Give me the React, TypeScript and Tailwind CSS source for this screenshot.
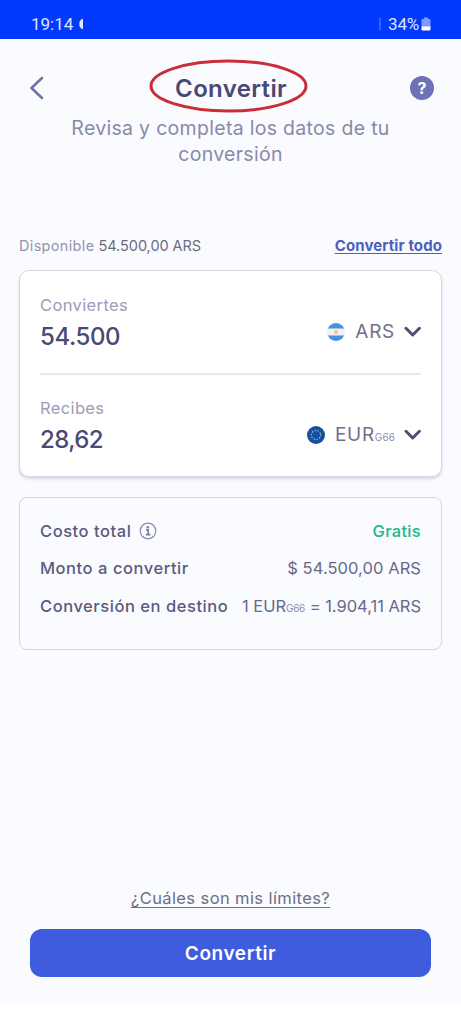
import React from 'react';

interface SummaryRow {
  label: string;
  info?: boolean;
  value: React.ReactNode;
  valueClass: string;
}

const rows: SummaryRow[] = [
  {
    label: 'Costo total',
    info: true,
    value: 'Gratis',
    valueClass: 'font-medium text-[#25b589] tracking-[0.3px]',
  },
  {
    label: 'Monto a convertir',
    value: '$ 54.500,00 ARS',
    valueClass: 'text-[#68688a] tracking-[0.07px]',
  },
  {
    label: 'Conversión en destino',
    value: (
      <>
        1 EUR<span className="text-[10px] tracking-[-0.3px] text-[#8d8da8]">G66</span> = 1.904,11 ARS
      </>
    ),
    valueClass: 'text-[#68688a] tracking-[-0.02px]',
  },
];

const ArgentinaFlag = () => (
  <svg width="18" height="18" viewBox="0 0 18 18">
    <clipPath id="flag-circle">
      <circle cx="9" cy="9" r="9" />
    </clipPath>
    <g clipPath="url(#flag-circle)">
      <rect width="18" height="18" fill="#eef2f6" />
      <rect width="18" height="5.5" fill="#4790db" />
      <rect y="12.5" width="18" height="5.5" fill="#4790db" />
    </g>
    <circle cx="9" cy="9" r="2" fill="#f3cc6b" />
  </svg>
);

const EuroFlag = () => (
  <svg width="18" height="18" viewBox="0 0 18 18">
    <circle cx="9" cy="9" r="9" fill="#124fa5" />
    <circle
      cx="9"
      cy="9"
      r="4.6"
      fill="none"
      stroke="#a7bf83"
      strokeWidth="1.4"
      strokeLinecap="round"
      strokeDasharray="0.2 2.69"
    />
  </svg>
);

const ChevronDown = () => (
  <svg width="18" height="12" viewBox="0 0 18 12" fill="none">
    <path d="M3 2.3L9.7 9L16.4 2.3" stroke="#4d4d78" strokeWidth="3" strokeLinecap="round" strokeLinejoin="round" />
  </svg>
);

const InfoIcon = () => (
  <svg width="18" height="18" viewBox="0 0 18 18" fill="none">
    <circle cx="9" cy="9" r="7.8" stroke="#8b8bab" strokeWidth="1.2" />
    <circle cx="8.8" cy="5.3" r="1.3" fill="#7d7da3" />
    <path d="M7 7.9H9.2V12.6M6.8 12.7H11.4" stroke="#7d7da3" strokeWidth="1.7" />
  </svg>
);

const App: React.FC = () => {
  return (
    <div className="h-[1024px] w-[461px] overflow-hidden bg-white font-['Inter',sans-serif]">
      <div className="flex h-[1004px] flex-col bg-[#fafbff]">
        <div className="flex h-[39px] shrink-0 items-center justify-between bg-[#0239ff] pl-[31px] pr-[30px] pt-[9px] font-['Roboto',sans-serif] text-[17px] leading-5 text-[#dce6ff]">
          <div className="flex items-center gap-1.5">
            <span>19:14</span>
            <svg width="4" height="12" viewBox="0 0 4 12">
              <path d="M4 1C-1 1 -1 11 4 11Z" fill="#dce6ff" />
            </svg>
          </div>
          <div className="flex items-center">
            <span className="mr-[7px] h-3 w-0.5 bg-[#3562ff]" />
            <span className="tracking-[-0.2px]">34%</span>
            <svg className="ml-0.5" width="10" height="14" viewBox="0 0 9 14">
              <path d="M0 3Q0 2 1 2H2.5V0.5H6.5V2H8Q9 2 9 3V10H0Z" fill="#7f9bff" />
              <path d="M0 9.5H9V12Q9 13.5 8 13.5H1Q0 13.5 0 12Z" fill="#fff" />
            </svg>
          </div>
        </div>

        <header className="flex h-[98px] shrink-0 items-center justify-between pl-[29px] pr-[27px]">
          <svg width="16" height="26" viewBox="0 0 16 26" fill="none">
            <path d="M13 3L2.5 13L13 23" stroke="#7373a5" strokeWidth="2.6" strokeLinecap="round" strokeLinejoin="round" />
          </svg>
          <div className="relative ml-[7px] mt-0.5">
            <h1 className="text-2xl font-semibold tracking-[0.35px] text-[#494974]">Convertir</h1>
            {/* hand-drawn highlight */}
            <svg className="absolute left-1/2 top-1/2 -translate-x-[82px] -translate-y-[30px]" width="162" height="56" viewBox="0 0 162 56" fill="none">
              <ellipse cx="79.5" cy="27" rx="77.5" ry="25" stroke="#c82d38" strokeWidth="3" />
            </svg>
          </div>
          <div className="flex size-6 items-center justify-center rounded-full bg-[#7070b4] text-base font-bold text-white">?</div>
        </header>

        <p className="-mt-[22px] text-center text-[19.5px] leading-[26px] tracking-[0.3px] text-[#8989a9]">
          Revisa y completa los datos de tu
          <br />
          conversión
        </p>

        <div className="mt-[67px] flex h-6 items-center justify-between px-[19px] text-[14.5px]">
          <span className="text-[#9393ad]">
            <span className="tracking-[0.33px]">Disponible</span> <span className="tracking-[-0.05px] text-[#6b6b80]">54.500,00 ARS</span>
          </span>
          <span className="text-[15px] font-bold tracking-[0.1px] text-[#4c60bd] underline decoration-1 underline-offset-2">Convertir todo</span>
        </div>

        <section className="mx-[19px] mt-3 h-[207px] shrink-0 rounded-[10px] border-[1.5px] border-[#d7d8e2] bg-white px-5 shadow-[0_2px_3px_rgba(80,80,120,0.22)]">
          <div className="flex h-[104px] justify-between border-b-2 border-[#e8e8ed] pt-[22px]">
            <div>
              <div className="text-[16.5px] leading-6 tracking-[0.37px] text-[#9c9cb7]">Conviertes</div>
              <div className="mt-0.5 text-2xl font-medium leading-[36px] tracking-[-0.4px] text-[#494974]">54.500</div>
            </div>
            <div className="mt-[27px] flex h-6 items-center">
              <ArgentinaFlag />
              <span className="ml-[10px] mr-2 text-[19px] tracking-[0.7px] text-[#70708e]">ARS</span>
              <ChevronDown />
            </div>
          </div>
          <div className="flex justify-between pt-[21px]">
            <div>
              <div className="text-[16.5px] leading-6 tracking-[0.37px] text-[#9c9cb7]">Recibes</div>
              <div className="mt-0.5 text-2xl font-medium leading-[36px] tracking-[-0.6px] text-[#494974]">28,62</div>
            </div>
            <div className="mt-[27px] flex h-6 items-center">
              <EuroFlag />
              <span className="ml-[10px] mr-2 text-[19px] tracking-[0.7px] text-[#70708e]">
                EUR<span className="text-[10px] tracking-[0.1px] text-[#8d8da8]">G66</span>
              </span>
              <ChevronDown />
            </div>
          </div>
        </section>

        <section className="mx-[19px] mt-5 flex h-[153px] shrink-0 flex-col gap-[13.5px] rounded-lg border-[1.5px] border-[#d4d5e3] px-5 pt-[21px]">
          {rows.map((row) => (
            <div key={row.label} className="flex h-6 items-center justify-between whitespace-nowrap text-[16.5px]">
              <div className="flex items-center gap-2 font-medium text-[#5a5a80]">
                <span className="tracking-[0.55px]">{row.label}</span>
                {row.info && <InfoIcon />}
              </div>
              <span className={row.valueClass}>{row.value}</span>
            </div>
          ))}
        </section>

        <div className="mt-auto flex flex-col items-center px-[30px] pb-[27px]">
          <a className="mb-[19px] text-[16.5px] leading-6 tracking-[0.4px] text-[#6e6e88] underline decoration-1 underline-offset-[3px]">
            ¿Cuáles son mis límites?
          </a>
          <button className="h-12 w-full rounded-xl bg-[#3e5cdd] pt-0.5 text-[19px] font-semibold tracking-[0.6px] text-white">
            Convertir
          </button>
        </div>
      </div>
    </div>
  );
};

export default App;
